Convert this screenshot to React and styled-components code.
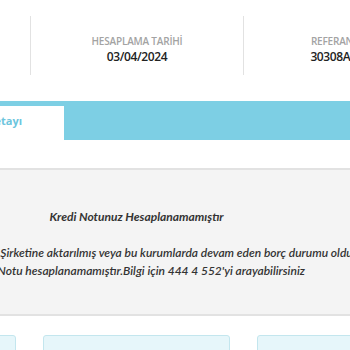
import styled, { createGlobalStyle } from "styled-components";

const GlobalStyle = createGlobalStyle`
	body {
		margin: 0;
		background: #ffffff;
		overflow: hidden;
	}
`;

const stats = [
	{ label: "KREDİ NOTU", value: "-" },
	{ label: "HESAPLAMA TARİHİ", value: "03/04/2024" },
	{ label: "REFERANS KODU", value: "30308A9C12E4" },
];

export default function App() {
	return (
		<>
			<GlobalStyle />
			<Page>
				<StatsRow>
					{stats.map((s, i) => (
						<Stat key={s.label} $first={i === 0}>
							<StatLabel>{s.label}</StatLabel>
							<StatValue>{s.value}</StatValue>
						</Stat>
					))}
				</StatsRow>
				<TabBar>
					<Tab>Kredi Notu Detayı</Tab>
				</TabBar>
				<MessagePanel>
					<Title>Kredi Notunuz Hesaplanamamıştır</Title>
					<Text>
						Borcun Varlık Yönetim Şirketine aktarılmış veya bu kurumlarda devam eden borç durumu olduğu için
						<br />
						Kredi Notu hesaplanamamıştır.Bilgi için 444 4 552'yi arayabilirsiniz
					</Text>
				</MessagePanel>
				<Boxes>
					<Box />
					<Box />
					<Box />
				</Boxes>
			</Page>
		</>
	);
}

const Page = styled.div`
	width: 639px;
	margin-left: -183px;
`;

const StatsRow = styled.div`
	display: grid;
	grid-template-columns: repeat(3, 213px);
	padding-top: 16px;
`;

const Stat = styled.div`
	height: 59px;
	display: flex;
	flex-direction: column;
	align-items: center;
	justify-content: center;
	border-left: ${(p) => (p.$first ? "none" : "1px solid #e2e2e2")};
	padding-top: 8px;
	box-sizing: border-box;
`;

const StatLabel = styled.div`
	font-family: "Open Sans", sans-serif;
	font-size: 10px;
	font-weight: 600;
	color: #a3a3a3;
	letter-spacing: -0.2px;
	line-height: 14px;
`;

const StatValue = styled.div`
	font-family: "Open Sans", sans-serif;
	font-size: 12px;
	font-weight: 600;
	color: #222222;
	letter-spacing: -0.4px;
	line-height: 17px;
`;

const TabBar = styled.div`
	margin-top: 26px;
	height: 39px;
	background: #7dcfe4;
	display: flex;
	align-items: flex-end;
	padding-left: 65px;
`;

const Tab = styled.div`
	width: 182px;
	height: 34px;
	box-sizing: border-box;
	padding-bottom: 6px;
	background: #ffffff;
	display: flex;
	align-items: center;
	justify-content: center;
	font-family: "Open Sans", sans-serif;
	font-size: 11px;
	font-weight: 700;
	color: #6cc5dd;
`;

const MessagePanel = styled.div`
	margin-top: 28px;
	height: 148px;
	box-sizing: border-box;
	background: #f4f4f4;
	border-top: 2px solid #e2e2e2;
	border-bottom: 2px solid #e2e2e2;
	text-align: center;
	padding-top: 38px;
	font-family: Lato, sans-serif;
	font-style: italic;
	color: #333333;
`;

const Title = styled.div`
	font-size: 12px;
	font-weight: 700;
	line-height: 18px;
`;

const Text = styled.div`
	margin-top: 18px;
	font-size: 12px;
	font-weight: 600;
	line-height: 18px;
`;

const Boxes = styled.div`
	display: grid;
	grid-template-columns: repeat(3, 187px);
	gap: 27px;
	padding: 19px 12px 0;
`;

const Box = styled.div`
	height: 40px;
	background: #e6f6fa;
	border: 1px solid #c3e6ee;
	border-radius: 3px;
`;
